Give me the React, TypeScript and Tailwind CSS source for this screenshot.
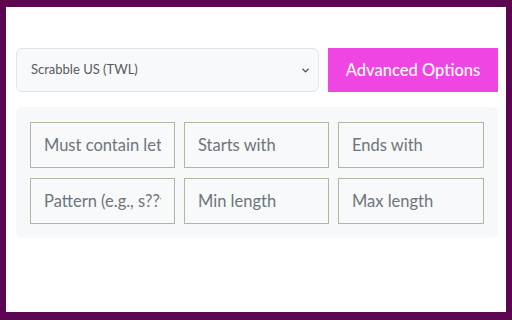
import { ChevronDown } from 'lucide-react'

const fields = [
  'Must contain letters',
  'Starts with',
  'Ends with',
  'Pattern (e.g., s??t)',
  'Min length',
  'Max length',
]

export default function App() {
  return (
    <div
      className="h-[320px] w-[512px] bg-[#5c0651] pt-[7px] pr-[6px] pb-[8px] pl-[6px]"
      style={{ fontFamily: 'Lato, "Noto Sans", sans-serif' }}
    >
      <div className="h-full w-full bg-white pl-[10px] pr-[8px] pt-[41px]">
        {/* Dictionary + advanced toggle */}
        <div className="flex items-center gap-[9px]">
          <div className="relative w-[303px]">
            <select className="h-[44px] w-full appearance-none rounded-md border border-[#e2e4e8] bg-[#f8f9fa] pl-[14px] text-[13px] text-[#555b61] outline-none">
              <option>Scrabble US (TWL)</option>
            </select>
            <ChevronDown
              className="pointer-events-none absolute right-[8px] top-[17px] h-[11px] w-[11px] text-[#495057]"
              strokeWidth={3}
            />
          </div>
          <button className="h-[44px] w-[170px] bg-[#ef45e2] text-[16.5px] font-medium text-white">
            Advanced Options
          </button>
        </div>

        {/* Advanced filters */}
        <div className="mt-[15px] rounded-md bg-[#f7f8fa] px-[14px] pt-[15px] pb-[14px]">
          <div className="grid grid-cols-[145px_145px_146px] gap-x-[9px] gap-y-[10px]">
            {fields.map((f) => (
              <input
                key={f}
                placeholder={f}
                className="h-[46px] w-full border border-[#b3b69f] bg-[#f8f9fa] px-[13px] text-[16.5px] text-[#495057] outline-none placeholder:text-[#6c757d]"
              />
            ))}
          </div>
        </div>
      </div>
    </div>
  )
}
